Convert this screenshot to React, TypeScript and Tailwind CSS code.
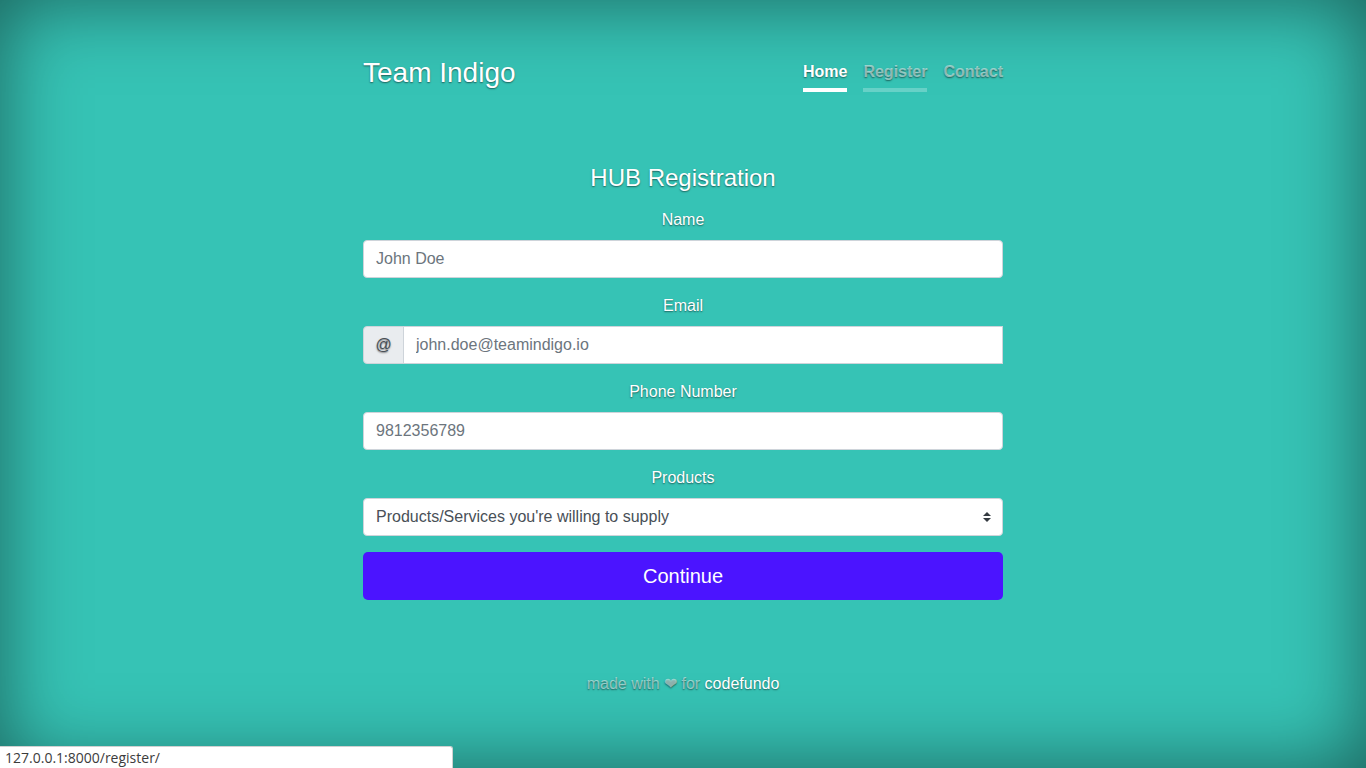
import React from "react"

const fieldClass =
  "block w-full h-[38px] px-3 text-base text-[#495057] placeholder:text-[#6c757d] bg-white border border-[#ced4da] rounded-[4px] [text-shadow:none] outline-none"

function Field({ label, children }: { label: string; children: React.ReactNode }) {
  return (
    <div className="mb-4">
      <label className="block text-center leading-6 mb-2">{label}</label>
      {children}
    </div>
  )
}

export default function App() {
  return (
    <div
      className="relative min-h-screen flex flex-col bg-[#36c3b5] text-white shadow-[inset_0_0_5rem_rgba(0,0,0,0.5)] [text-shadow:0_0.05rem_0.1rem_rgba(0,0,0,0.5)]"
      style={{ fontFamily: '"Liberation Sans", Arial, sans-serif' }}
    >
      <div className="w-[640px] mx-auto flex flex-col flex-1">
        {/* Masthead */}
        <header className="pt-[55px] flex items-start justify-between">
          <h3 className="text-[28px] leading-[1.2] font-normal mt-[1px]">Team Indigo</h3>
          <nav className="flex gap-4 font-bold mt-[1px]">
            <a href="#" className="py-1 leading-6 text-white border-b-4 border-white">
              Home
            </a>
            <a href="#" className="py-1 leading-6 text-white/50 border-b-4 border-white/25">
              Register
            </a>
            <a href="#" className="py-1 leading-6 text-white/50 border-b-4 border-transparent">
              Contact
            </a>
          </nav>
        </header>

        {/* Registration form */}
        <main className="mt-[72px]">
          <h4 className="text-2xl leading-[1.2] text-center mb-[15px]">HUB Registration</h4>
          <form>
            <Field label="Name">
              <input type="text" placeholder="John Doe" className={fieldClass} />
            </Field>
            <Field label="Email">
              <div className="flex h-[38px]">
                <span className="flex items-center justify-center w-[41px] bg-[#e9ecef] border border-[#ced4da] rounded-l-[4px] text-[#495057]">
                  @
                </span>
                <input
                  type="text"
                  placeholder="john.doe@teamindigo.io"
                  className="flex-1 h-[38px] px-3 -ml-px text-base text-[#495057] placeholder:text-[#6c757d] bg-white border border-[#ced4da] [text-shadow:none] outline-none"
                />
              </div>
            </Field>
            <Field label="Phone Number">
              <input type="text" placeholder="9812356789" className={fieldClass} />
            </Field>
            <Field label="Products">
              <div className="relative">
                <select className={fieldClass + " appearance-none pr-8"} defaultValue="">
                  <option value="">Products/Services you're willing to supply</option>
                </select>
                <svg
                  className="absolute right-3 top-1/2 -translate-y-1/2"
                  width="8"
                  height="10"
                  viewBox="0 0 4 5"
                >
                  <path fill="#343a40" d="M2 0L0 2h4zm0 5L0 3h4z" />
                </svg>
              </div>
            </Field>
            <button
              type="button"
              className="w-full h-12 rounded-[5px] bg-[#4b14ff] text-white text-xl [text-shadow:none]"
            >
              Continue
            </button>
          </form>
        </main>

        {/* Footer */}
        <footer className="mt-[72px] pb-[60px] text-center leading-6 text-white/50">
          made with <span>{"\u2764\uFE0E"}</span> for <a href="#" className="text-white">codefundo</a>
        </footer>
      </div>

      {/* Browser status bar */}
      <div
        className="absolute left-0 bottom-0 w-[453px] h-[22px] pl-[5px] bg-white border-t border-r border-[#d0d0d0] rounded-tr-[3px] text-[14px] leading-[22px] text-[#3c3c3c] [text-shadow:none]"
        style={{ fontFamily: '"Open Sans", "DejaVu Sans", sans-serif' }}
      >
        127.0.0.1:8000/register/
      </div>
    </div>
  )
}
